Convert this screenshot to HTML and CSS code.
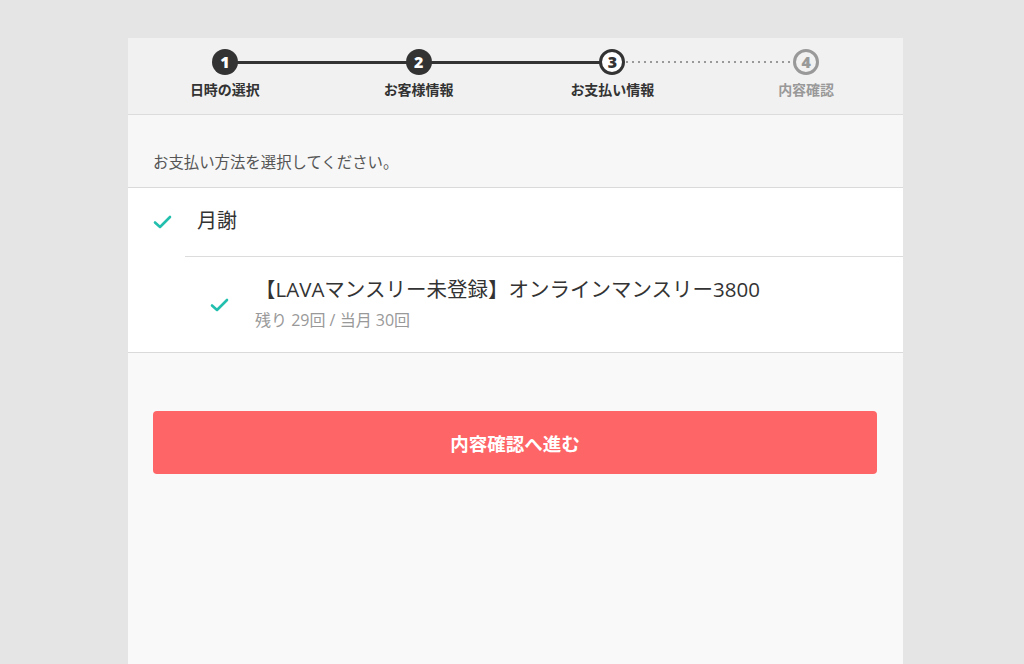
FILE: index.html
```html
<!DOCTYPE html>
<html lang="ja">
<head>
<meta charset="utf-8">
<link rel="stylesheet" href="styles.css">
</head>
<body>
<div class="page">
  <div class="steps">
    <div class="step done">
      <div class="circle">1</div>
      <div class="label">日時の選択</div>
    </div>
    <div class="step done">
      <div class="circle">2</div>
      <div class="label">お客様情報</div>
    </div>
    <div class="step current">
      <div class="circle">3</div>
      <div class="label">お支払い情報</div>
    </div>
    <div class="step todo">
      <div class="circle">4</div>
      <div class="label">内容確認</div>
    </div>
  </div>
  <div class="prompt">お支払い方法を選択してください。</div>
  <div class="options">
    <div class="opt-row group">
      <svg class="check" width="19" height="14" viewBox="0 0 19 14"><path d="M2 7.5 L7 12 L17 2" fill="none" stroke="#22bfae" stroke-width="2.6" stroke-linecap="round" stroke-linejoin="round"/></svg>
      <span class="group-name">月謝</span>
    </div>
    <div class="opt-row plan">
      <svg class="check" width="19" height="14" viewBox="0 0 19 14"><path d="M2 7.5 L7 12 L17 2" fill="none" stroke="#22bfae" stroke-width="2.6" stroke-linecap="round" stroke-linejoin="round"/></svg>
      <div class="plan-text">
        <div class="plan-name">【LAVAマンスリー未登録】オンラインマンスリー3800</div>
        <div class="plan-sub">残り 29回 / 当月 30回</div>
      </div>
    </div>
  </div>
  <div class="actions">
    <button class="next">内容確認へ進む</button>
  </div>
</div>
</body>
</html>
```
FILE: styles.css
```css
html, body {
  margin: 0;
  padding: 0;
}
body {
  background: #e5e5e5;
  font-family: "Open Sans", "Noto Sans CJK JP", sans-serif;
  color: #333;
}
.page {
  width: 775px;
  margin: 38px 0 0 128px;
  background: #f9f9f9;
  min-height: 626px;
}
.steps {
  display: flex;
  background: #f1f1f1;
  border-bottom: 1px solid #dcdcdc;
  height: 77px;
  box-sizing: border-box;
  padding-top: 11px;
}
.step {
  flex: 1;
  display: flex;
  flex-direction: column;
  align-items: center;
  position: relative;
}
.step + .step::before {
  content: "";
  position: absolute;
  top: 12px;
  left: -50%;
  right: 50%;
  height: 3px;
  background: #333;
  z-index: 0;
}
.step.todo::before {
  top: 12px;
  height: 2px;
  background: radial-gradient(circle, #999 0.9px, transparent 1.2px) 0 0 / 6px 2px repeat-x;
}
.circle {
  position: relative;
  z-index: 1;
  width: 26px;
  height: 26px;
  border-radius: 50%;
  box-sizing: border-box;
  display: flex;
  align-items: center;
  justify-content: center;
  font-family: "Open Sans", sans-serif;
  font-weight: 800;
  font-size: 16px;
  line-height: 1;
}
.done .circle {
  background: #333;
  color: #fff;
}
.current .circle {
  background: #fff;
  border: 3px solid #333;
  color: #333;
}
.todo .circle {
  background: #f1f1f1;
  border: 3px solid #999;
  color: #999;
}
.label {
  margin-top: 5px;
  font-size: 14px;
  font-weight: 700;
  color: #333;
  line-height: 20px;
}
.todo .label {
  color: #999;
}
.prompt {
  background: #f7f7f7;
  height: 73px;
  box-sizing: border-box;
  padding: 37px 0 0 25px;
  font-size: 15.4px;
  color: #555;
  line-height: 22px;
  border-bottom: 1px solid #dadada;
}
.options {
  background: #fff;
  border-bottom: 1px solid #dadada;
}
.opt-row {
  display: flex;
  align-items: center;
}
.group {
  height: 69px;
  padding-left: 25px;
  position: relative;
}
.group::after {
  content: "";
  position: absolute;
  left: 57px;
  right: 0;
  bottom: 0;
  height: 1px;
  background: #dcdcdc;
}
.group .check {
  margin-right: 25px;
  margin-bottom: 2px;
}
.group-name {
  font-size: 20px;
  color: #333;
  margin-bottom: 6px;
}
.plan {
  height: 95px;
  padding-left: 82px;
}
.plan .check {
  margin-right: 26px;
  margin-top: 0;
}
.plan-text {
  display: flex;
  flex-direction: column;
  margin-top: -3px;
}
.plan-name {
  font-size: 20.5px;
  color: #333;
  line-height: 26px;
}
.plan-sub {
  margin-top: 7px;
  font-size: 16px;
  color: #999;
  line-height: 22px;
}
.actions {
  padding: 58px 26px 0 25px;
}
.next {
  display: block;
  width: 100%;
  height: 63px;
  border: none;
  border-radius: 4px;
  background: #fe6567;
  color: #fff;
  font-family: "Open Sans", "Noto Sans CJK JP", sans-serif;
  font-size: 18.5px;
  font-weight: 700;
  cursor: pointer;
}
```
